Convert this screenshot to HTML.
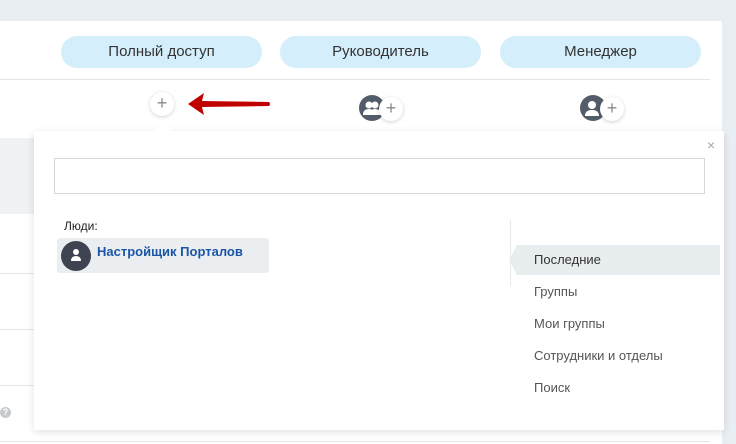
<!DOCTYPE html>
<html><head><meta charset="utf-8"><style>
*{margin:0;padding:0;box-sizing:border-box}
body{width:736px;height:444px;overflow:hidden;background:#e9eef2;position:relative;font-family:"Liberation Sans","DejaVu Sans",sans-serif}
.a{position:absolute}
.pill{position:absolute;top:36px;height:32px;border-radius:16px;background:#d5eefb;color:#333;font-size:15px;line-height:32px;text-align:center}
.plus{position:absolute;width:24px;height:24px;border-radius:50%;background:#fff;box-shadow:0 1px 4px rgba(0,0,0,.18);color:#888;font-size:18px;line-height:23px;text-align:center}
.av{position:absolute;width:26px;height:26px;border-radius:50%;background:#535c69;overflow:hidden}
.mi{position:absolute;left:534px;font-size:13px;color:#555}
</style></head><body>
<div class="a" style="left:0;top:21px;width:722px;height:423px;background:#fff"></div>
<div class="a" style="left:0;top:79px;width:710px;height:1px;background:#e3e6e9"></div>
<div class="a" style="left:0;top:138px;width:40px;height:76px;background:#eef2f4"></div>
<div class="a" style="left:0;top:273px;width:40px;height:1px;background:#e3e6e9"></div>
<div class="a" style="left:0;top:329px;width:40px;height:1px;background:#e3e6e9"></div>
<div class="a" style="left:0;top:385px;width:40px;height:1px;background:#e3e6e9"></div>
<div class="a" style="left:0;top:441px;width:710px;height:1px;background:#e3e6e9"></div>
<div class="a" style="left:0;top:407px;width:11px;height:11px;border-radius:50%;background:#c6cacd;color:#fff;font-size:9px;font-weight:bold;text-align:center;line-height:11px">?</div>
<div class="pill" style="left:61px;width:201px">Полный доступ</div>
<div class="pill" style="left:280px;width:201px">Руководитель</div>
<div class="pill" style="left:500px;width:201px">Менеджер</div>
<div class="plus" style="left:150px;top:92px">+</div>
<svg class="a" style="left:184px;top:92px" width="90" height="24"><path d="M4 12 L20 1 L18 9 L85 10 Q87 12 85 14 L18 15 L20 23 Z" fill="#c00000"/></svg>
<div class="av" style="left:359px;top:95px"><svg width="26" height="26"><circle cx="10" cy="10" r="3.5" fill="#fff"/><path d="M4 20 Q4 14 10 14 Q16 14 16 20Z" fill="#fff"/><circle cx="16" cy="10" r="3.5" fill="#fff"/><path d="M11 20 Q11 14 16 14 Q22 14 22 20Z" fill="#fff"/></svg></div>
<div class="plus" style="left:379px;top:97px">+</div>
<div class="av" style="left:580px;top:95px"><svg width="26" height="26"><circle cx="12" cy="10" r="4" fill="#fff"/><path d="M5 21 Q5 15 12 15 Q19 15 19 21Z" fill="#fff"/></svg></div>
<div class="plus" style="left:600px;top:97px">+</div>
<div class="a" style="left:34px;top:131px;width:690px;height:299px;background:#fff;box-shadow:0 2px 8px rgba(0,0,0,.12)"></div>
<div class="a" style="left:156px;top:125px;width:14px;height:14px;background:#fff;transform:rotate(45deg)"></div>
<div class="a" style="left:707px;top:137px;color:#aaa;font-size:14px">×</div>
<div class="a" style="left:54px;top:158px;width:651px;height:36px;border:1px solid #d5d8db"></div>
<div class="a" style="left:64px;top:219px;font-size:12px;color:#222">Люди:</div>
<div class="a" style="left:57px;top:238px;width:212px;height:35px;background:#ebeef1;border-radius:3px"></div>
<div class="a" style="left:61px;top:241px;width:30px;height:30px;border-radius:50%;background:#3d4350"></div>
<svg class="a" style="left:69px;top:248px" width="14" height="14"><circle cx="7" cy="4" r="3" fill="#fff"/><path d="M2 13 Q2 8 7 8 Q12 8 12 13Z" fill="#fff"/></svg>
<div class="a" style="left:97px;top:244px;font-size:13px;font-weight:bold;color:#1b55a6">Настройщик Порталов</div>
<div class="a" style="left:510px;top:220px;width:1px;height:66px;background:#e6e9ec"></div>
<svg class="a" style="left:509px;top:245px" width="212" height="30"><path d="M0 15 L8 0 L211 0 L211 30 L8 30 Z" fill="#e8edf0"/></svg>
<div class="mi" style="top:252px;color:#333">Последние</div>
<div class="mi" style="top:284px">Группы</div>
<div class="mi" style="top:316px">Мои группы</div>
<div class="mi" style="top:348px">Сотрудники и отделы</div>
<div class="mi" style="top:380px">Поиск</div>
</body></html>
